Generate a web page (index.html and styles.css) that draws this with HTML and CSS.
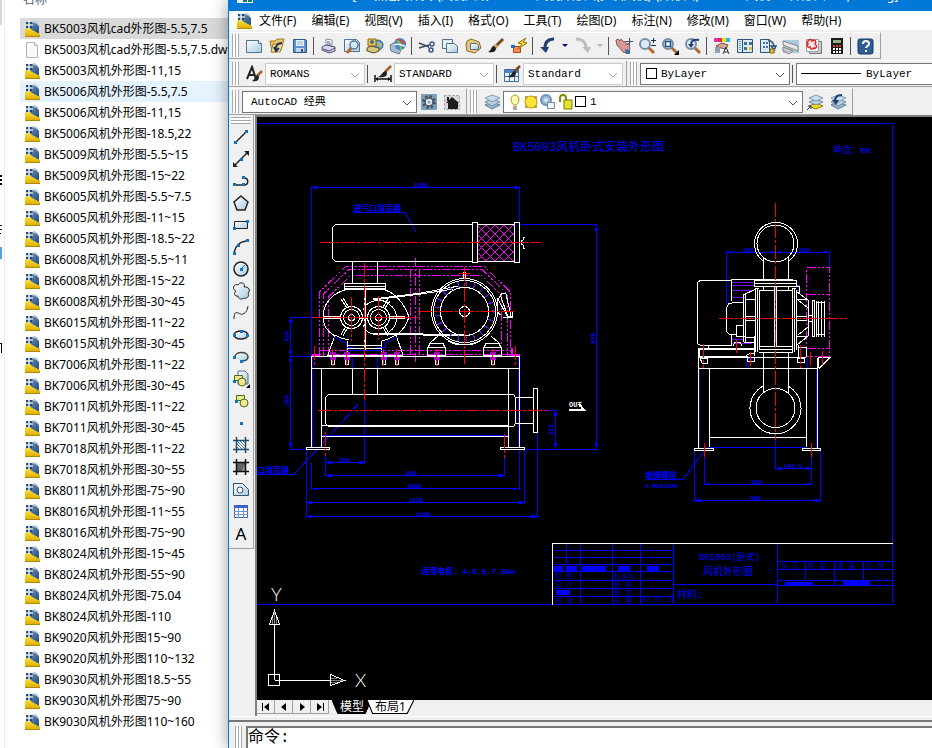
FILE: index.html
```html
<!DOCTYPE html>
<html lang="zh-CN">
<head>
    <meta charset="UTF-8">
    <meta name="viewport" content="width=device-width, initial-scale=1.0">
    <title>AutoCAD - BK5003风机cad外形图</title>
    <link rel="stylesheet" href="styles.css">
</head>
<body>
    <svg class="sprite" aria-hidden="true">
        <defs>
            <linearGradient id="gPage" x1="0" y1="0" x2="1" y2="1">
                <stop offset="0" stop-color="#7f9bb8"/><stop offset="1" stop-color="#1f4a80"/>
            </linearGradient>
            <linearGradient id="gGold" x1="0" y1="0" x2="0" y2="1">
                <stop offset="0" stop-color="#fbe23c"/><stop offset="1" stop-color="#e0b000"/>
            </linearGradient>
            <linearGradient id="gSky" x1="0" y1="0" x2="1" y2="1">
                <stop offset="0" stop-color="#ffffff"/><stop offset="1" stop-color="#a9cbe0"/>
            </linearGradient>
        </defs>
        <symbol id="dwg" viewBox="0 0 15 16">
            <path d="M3 1h7l4 4v8H1V3z" fill="url(#gPage)"/>
            <path d="M8 0c3 0 6 2 6 6v-1c-1-2-3-3-6-3z" fill="#b9c6d3"/>
            <path d="M0 8c3-2 5-1 7 1l8 4v2H0z" fill="url(#gGold)"/>
            <path d="M0 15.500h15" stroke="#b08a00"/>
            <path d="M1 1h2v2H1zM5 1h2v2H5zM1 5h2v2H1zM5 5h2v2H5z" fill="#24496f"/>
            <path d="M4 0v3M4 5v3M0 4h3M5 4h3" stroke="#fff"/>
            <circle cx="4" cy="4" r="1" fill="#fff"/>
        </symbol>
        <symbol id="blank" viewBox="0 0 15 16">
            <path d="M1.500.5h8l3 3v12h-11z" fill="#fafafa" stroke="#b5b5b5"/><path d="M9.500.5v3h3" fill="none" stroke="#b5b5b5"/>
        </symbol>
        <symbol id="lens" viewBox="0 0 18 18">
            <path d="M10 10l6 6" stroke="#b06a32" stroke-width="3"/><circle cx="7" cy="7" r="5" fill="#dcebf5" stroke="#7890a6" stroke-width="2"/>
        </symbol>
        <symbol id="brush" viewBox="0 0 18 18">
            <path d="M16 2L9 9" stroke="#7c4a20" stroke-width="3"/><path d="M10 8l-2-1-3 3 3 3 3-3z" fill="#d9a066"/><path d="M7 9c-3 0-2 4-6 6 5 1 8 0 8-4z" fill="#1c1c1c"/>
        </symbol>
        <symbol id="layers" viewBox="0 0 18 18">
            <path d="M2 12l7-3 8 3-8 4z" fill="#9db9cc" stroke="#5d7f97"/><path d="M2 9l7-3 8 3-8 4z" fill="#b9d0df" stroke="#6c8ca3"/><path d="M2 5l7-3 8 3-8 4z" fill="#c9dcea" stroke="#7f9db3"/>
        </symbol>
    </svg>

    <aside class="explorer">
        <div class="tree">
            <span class="tree-selected"></span>
            <svg width="2" height="340" viewBox="0 25 2 340"><path d="M0 175h2v2H0zM0 179h2v2H0zM0 183h2v2H0zM0 225h2v1H0zM0 229h2v1H0zM0 233h1v1H0zM0 343h2v1H0zM1 343h1v10H1z"/><path d="M0 247h2v12H0z" fill="#4ba3e3"/></svg>
        </div>
        <div class="files">
            <div class="column-head">名称</div>
            <ul class="file-list">
                <li class="selected"><svg><use href="#dwg"/></svg>BK5003风机cad外形图-5.5,7.5</li>
                <li><svg><use href="#blank"/></svg>BK5003风机cad外形图-5.5,7.5.dwl</li>
                <li><svg><use href="#dwg"/></svg>BK5003风机外形图-11,15</li>
                <li class="hovered"><svg><use href="#dwg"/></svg>BK5006风机外形图-5.5,7.5</li>
                <li><svg><use href="#dwg"/></svg>BK5006风机外形图-11,15</li>
                <li><svg><use href="#dwg"/></svg>BK5006风机外形图-18.5,22</li>
                <li><svg><use href="#dwg"/></svg>BK5009风机外形图-5.5~15</li>
                <li><svg><use href="#dwg"/></svg>BK5009风机外形图-15~22</li>
                <li><svg><use href="#dwg"/></svg>BK6005风机外形图-5.5~7.5</li>
                <li><svg><use href="#dwg"/></svg>BK6005风机外形图-11~15</li>
                <li><svg><use href="#dwg"/></svg>BK6005风机外形图-18.5~22</li>
                <li><svg><use href="#dwg"/></svg>BK6008风机外形图-5.5~11</li>
                <li><svg><use href="#dwg"/></svg>BK6008风机外形图-15~22</li>
                <li><svg><use href="#dwg"/></svg>BK6008风机外形图-30~45</li>
                <li><svg><use href="#dwg"/></svg>BK6015风机外形图-11~22</li>
                <li><svg><use href="#dwg"/></svg>BK6015风机外形图-30~45</li>
                <li><svg><use href="#dwg"/></svg>BK7006风机外形图-11~22</li>
                <li><svg><use href="#dwg"/></svg>BK7006风机外形图-30~45</li>
                <li><svg><use href="#dwg"/></svg>BK7011风机外形图-11~22</li>
                <li><svg><use href="#dwg"/></svg>BK7011风机外形图-30~45</li>
                <li><svg><use href="#dwg"/></svg>BK7018风机外形图-11~22</li>
                <li><svg><use href="#dwg"/></svg>BK7018风机外形图-30~55</li>
                <li><svg><use href="#dwg"/></svg>BK8011风机外形图-75~90</li>
                <li><svg><use href="#dwg"/></svg>BK8016风机外形图-11~55</li>
                <li><svg><use href="#dwg"/></svg>BK8016风机外形图-75~90</li>
                <li><svg><use href="#dwg"/></svg>BK8024风机外形图-15~45</li>
                <li><svg><use href="#dwg"/></svg>BK8024风机外形图-55~90</li>
                <li><svg><use href="#dwg"/></svg>BK8024风机外形图-75.04</li>
                <li><svg><use href="#dwg"/></svg>BK8024风机外形图-110</li>
                <li><svg><use href="#dwg"/></svg>BK9020风机外形图15~90</li>
                <li><svg><use href="#dwg"/></svg>BK9020风机外形图110~132</li>
                <li><svg><use href="#dwg"/></svg>BK9030风机外形图18.5~55</li>
                <li><svg><use href="#dwg"/></svg>BK9030风机外形图75~90</li>
                <li><svg><use href="#dwg"/></svg>BK9030风机外形图110~160</li>
            </ul>
        </div>
    </aside>

    <main class="cad">
        <header class="titlebar">
            <svg class="app-icon" viewBox="0 0 16 16"><path d="M0 0h16v16H0z" fill="#e8f4f2"/><path d="M1 12h3V4h3v10h2V6h3v8h3" fill="none" stroke="#0f7a70" stroke-width="2"/></svg>
            <span>AutoCAD 2007 - [D:\新建文件夹\(风机图纸\BK5003风机外形图(罗茨风机)\(外形图)\BK5003风机cad外形图-5.5,7.5.dwg]</span>
        </header>

        <nav class="menubar">
            <svg class="doc-icon"><use href="#dwg"/></svg>
            <button>文件(F)</button>
            <button>编辑(E)</button>
            <button>视图(V)</button>
            <button>插入(I)</button>
            <button>格式(O)</button>
            <button>工具(T)</button>
            <button>绘图(D)</button>
            <button>标注(N)</button>
            <button>修改(M)</button>
            <button>窗口(W)</button>
            <button>帮助(H)</button>
        </nav>

        <div class="toolbars">
            <div class="bar-row">
                <div class="toolbar">
                    <i class="grip"></i>
                    <button class="tool" title="新建"><svg viewBox="0 0 18 18"><path d="M1.500 3.500h12l3 3v9h-15z" fill="url(#gSky)" stroke="#4f7391"/><path d="M13.500 3.500v3h3" fill="#fff" stroke="#4f7391"/></svg></button>
                    <button class="tool" title="打开"><svg viewBox="0 0 18 18"><path d="M2 4h5l2-2h7l-3 11-9 2z" fill="#e9c463" stroke="#a07a1f"/><path d="M5 7h10l-3 8H3z" fill="#f7e29b" stroke="#a07a1f"/><path d="M14 6c-4 0-7 3-6 7M6 10l2 4 3-3" fill="none" stroke="#1c3557" stroke-width="2"/></svg></button>
                    <button class="tool" title="保存"><svg viewBox="0 0 18 18"><path d="M2.500 2.500h12l1 1v12h-13z" fill="#5f93cf" stroke="#31588c"/><path d="M5 3h8v6H5z" fill="#e8f1fa"/><path d="M6 5h6M6 7h6" stroke="#9ab4cf"/><path d="M5 11h8v4H5z" fill="#c8d6e3"/><path d="M10 12h2v3h-2z" fill="#31588c"/></svg></button>
                    <i class="sep"></i>
                    <button class="tool" title="打印"><svg viewBox="0 0 18 18"><path d="M6 9V2l6 1v6z" fill="#fff" stroke="#8a8aa8"/><path d="M2 10l4-2 9 2v4l-6 2-7-3z" fill="#d7d7e6" stroke="#4d4d78"/><path d="M3 12l6 2 6-3M7 5h3M7 7h4" fill="none" stroke="#4d4d78"/></svg></button>
                    <button class="tool" title="打印预览"><svg viewBox="0 0 18 18"><path d="M1.500 2.500h12l3 3v9h-15z" fill="url(#gSky)" stroke="#4f7391"/><path d="M9 10l-5 6" stroke="#b06a32" stroke-width="3"/><circle cx="11" cy="8" r="4" fill="#d5e8f5" stroke="#5a7895" stroke-width="1.500"/></svg></button>
                    <button class="tool" title="发布"><svg viewBox="0 0 18 18"><circle cx="12" cy="8" r="5" fill="#6f9fd0" stroke="#35597f"/><path d="M11 5l5 2-2 4z" fill="#a5c56d"/><path d="M2 2h8v7H2z" fill="#f0c84a" stroke="#8a6a10"/><circle cx="6" cy="5" r="2" fill="#3a6ea5"/><path d="M1 11l4-2 8 2v3l-5 2-7-2z" fill="#d7c87c" stroke="#4d4d28"/></svg></button>
                    <button class="tool" title="三维 DWF"><svg viewBox="0 0 18 18"><path d="M1 8l7-4 6 5-4 8-8-3z" fill="#a8bccd" stroke="#657e95"/><circle cx="11" cy="7" r="6" fill="#4b86c4"/><path d="M7 3c5-2 5 4 10 3" stroke="#d24b3e" stroke-width="2" fill="none"/><path d="M8 4c4 1 4 8 4 9" stroke="#6fc25f" stroke-width="2" fill="none"/><path d="M5 8c4-2 7 0 11 1" stroke="#eef4fa" stroke-width="1.500" fill="none"/></svg></button>
                    <i class="sep"></i>
                    <button class="tool" title="剪切"><svg viewBox="0 0 18 18"><path d="M1 6l10 4M1 11l10-3" stroke="#3b4a5e" stroke-width="1.500"/><circle cx="14" cy="7" r="2" fill="none" stroke="#3c5488" stroke-width="1.500"/><circle cx="13" cy="13" r="2" fill="none" stroke="#3c5488" stroke-width="1.500"/><path d="M10 9l2-1M9 9l3 3" stroke="#3c5488"/></svg></button>
                    <button class="tool" title="复制"><svg viewBox="0 0 18 18"><path d="M1.500 2.500h10v9h-10z" fill="#e6f0f7" stroke="#4f7391"/><path d="M5.500 6.500h8l3 3v6h-11z" fill="url(#gSky)" stroke="#4f7391"/></svg></button>
                    <button class="tool" title="粘贴"><svg viewBox="0 0 18 18"><path d="M3 4l4-2 8 3 2 6-6 5-8-2-1-6z" fill="#e5c879" stroke="#8f6d22"/><path d="M6.500 6.500h6l2 2v4h-8z" fill="url(#gSky)" stroke="#4f7391"/></svg></button>
                    <button class="tool" title="特性匹配"><svg><use href="#brush"/></svg></button>
                    <button class="tool" title="块编辑器"><svg viewBox="0 0 18 18"><path d="M3.500 9.500h7v6h-7z" fill="#f58b53" stroke="#b3471a"/><path d="M1 8h4v3H1z" fill="#1f6fc4"/><path d="M16 1L8 6l4 1-4 5 9-6-4-1z" fill="#ffd92e" stroke="#9a7300"/></svg></button>
                    <i class="sep"></i>
                    <button class="tool" title="放弃"><svg viewBox="0 0 18 18"><path d="M15 2C8 2 6 6 6 11" fill="none" stroke="#1d3f73" stroke-width="3"/><path d="M1 10h9l-3 6z" fill="#1d3f73"/></svg></button>
                    <button class="drop" title="放弃列表"></button>
                    <button class="tool" title="重做"><svg viewBox="0 0 18 18"><path d="M2 2c7 0 10 4 10 9" fill="none" stroke="#b9bdc2" stroke-width="3"/><path d="M8 10h9l-3 6z" fill="#b9bdc2"/></svg></button>
                    <button class="drop off" title="重做列表"></button>
                    <i class="sep"></i>
                    <button class="tool" title="实时平移"><svg viewBox="0 0 18 18"><path d="M1 3l2-1 2 2 1-2 3 3 1-1 2 4 1-2 1 1 1 5-3 4-4-1-6-7z" fill="#d69a94" stroke="#8e5651"/><path d="M10 12l5 1v4h-4z" fill="#3a6ea5"/><path d="M14.500 1v7M11 4.500h7" stroke="#2b4f7d"/></svg></button>
                    <button class="tool" title="实时缩放"><svg viewBox="0 0 18 18"><use href="#lens"/><path d="M13 3.500h5M15.500 1v5M13 8.500h5" stroke="#1c3557"/></svg></button>
                    <button class="tool" title="窗口缩放"><svg viewBox="0 0 18 18"><use href="#lens"/><path d="M4.500 4.500h5v5h-5z" fill="#fff" stroke="#1d4f8c" stroke-width="1.500"/><path d="M18 13v5h-5z" fill="#000"/></svg></button>
                    <button class="tool" title="缩放上一个"><svg viewBox="0 0 18 18"><use href="#lens"/><path d="M15 3C8 2 7 5 7 8" stroke="#1d3f73" stroke-width="2" fill="none"/><path d="M4 7h6l-3 4z" fill="#1d3f73"/></svg></button>
                    <i class="sep"></i>
                    <button class="tool" title="特性"><svg viewBox="0 0 18 18"><path d="M1 1h4v4H1z" fill="#e02fc0"/><path d="M5 1h4v4H5z" fill="#e03030"/><path d="M9 1h4v4H9z" fill="#f0e020"/><path d="M13 1h4v4h-4z" fill="#28b8e0"/><path d="M3 9l6-3 6 2-2 4-5-1z" fill="#dba596" stroke="#7d4f45"/><path d="M2 10h5v6H2z" fill="#8fa0b0"/><path d="M10 17l3-7 3 7M11 15h4" fill="none" stroke="#333"/></svg></button>
                    <button class="tool" title="设计中心"><svg viewBox="0 0 18 18"><path d="M1.500 2.500h15v13h-15z" fill="#dbe9f3" stroke="#2d537c"/><path d="M6.500 3v12" stroke="#2d537c"/><path d="M4 4v10" stroke="#2d537c" stroke-dasharray="1 1"/><path d="M8 5h3v3H8zM13 5h3v3h-3zM8 10h3v3H8z" fill="#44709b"/><path d="M13 10h3v3h-3z" fill="#e4c42f"/></svg></button>
                    <button class="tool" title="工具选项板"><svg viewBox="0 0 18 18"><path d="M1.500 2.500h9v13h-9z" fill="#dbe9f3" stroke="#2d537c"/><path d="M4 5h2v2H4zM7 5h2v2H7zM4 9h2v2H4zM7 9h2v2H7z" fill="#44709b"/><path d="M9 4c4-1 6 3 6 6M12 9h5l-2 4z" fill="none" stroke="#2d537c" stroke-width="1.500"/><path d="M11 12h4v4h-4z" fill="#e4c42f" stroke="#7d6b10"/></svg></button>
                    <button class="tool" title="图纸集管理器"><svg viewBox="0 0 18 18"><path d="M1 3h16v13H1z" fill="#a9c9dc"/><path d="M1 4l15 5v5L1 8z" fill="#e6e6e6" stroke="#888"/><path d="M1 10l10 4-4 3-6-3z" fill="#c4c8cc" stroke="#888"/></svg></button>
                    <button class="tool" title="标记集管理器"><svg viewBox="0 0 18 18"><path d="M4.500 4.500h12v12h-12z" fill="#ccc" stroke="#777"/><path d="M1.500 2.500h12v12h-12z" fill="#fff" stroke="#8fa0b0"/><path d="M3 4c2-3 4-1 4 0 3-2 5 1 3 3 3 2 1 5-1 4-2 2-4 1-4-1-3 1-4-2-2-3-1-1-1-2 0-3z" fill="#ffe3e3" stroke="#e12222" stroke-width="1.500"/></svg></button>
                    <button class="tool" title="快速计算器"><svg viewBox="0 0 18 18"><path d="M3 1h12v16H3z" fill="#1c1c1c"/><path d="M5 3h8v3H5z" fill="#8fb07f"/><path d="M5 9h8" stroke="#e03030" stroke-width="2" stroke-dasharray="2 1"/><path d="M5 12h8M5 15h8" stroke="#fff" stroke-width="2" stroke-dasharray="2 1"/></svg></button>
                    <i class="sep"></i>
                    <button class="tool" title="帮助"><svg viewBox="0 0 18 18"><rect x="1" y="2" width="15" height="15" rx="2" fill="#2d5d92" stroke="#173c66"/><path d="M6 7c0-4 6-4 6 0 0 2-3 2-3 4M9 13v2" fill="none" stroke="#fff" stroke-width="2"/></svg></button>
                </div>
            </div>

            <div class="bar-row">
                <div class="toolbar">
                    <i class="grip"></i>
                    <button class="tool" title="文字样式"><svg viewBox="0 0 18 18"><path d="M2 14L7 2l4 12M4 10h6" fill="none" stroke="#222" stroke-width="2"/><path d="M17 6l-5 5" stroke="#a3622f" stroke-width="2.500"/><path d="M13 10c-3 0-2 4-6 6 4 1 7 0 7-4z" fill="#222"/></svg></button>
                    <label class="combo soft style"><select aria-label="文字样式"><option>ROMANS</option></select></label>
                    <i class="sep"></i>
                    <button class="tool" title="标注样式"><svg viewBox="0 0 18 18"><path d="M1 10v7M17 10v7M2 14h14" stroke="#111" stroke-width="1.500"/><path d="M4 12v4l-3-2zM14 12v4l3-2z" fill="#111"/><path d="M17 1l-6 6" stroke="#a3622f" stroke-width="2.500"/><path d="M12 6c-3 0-4 4-8 6 5 1 9 0 9-4z" fill="#222"/></svg></button>
                    <label class="combo soft style"><select aria-label="标注样式"><option>STANDARD</option></select></label>
                    <i class="sep"></i>
                    <button class="tool" title="表格样式"><svg viewBox="0 0 18 18"><path d="M1.500 4.500h14v12h-14z" fill="#eaf2fa" stroke="#3d6ea8"/><path d="M2 5h13v3H2z" fill="#4f83c4"/><path d="M2 11.500h13M6.500 8v8M11.500 8v8" stroke="#3d6ea8"/><path d="M17 1l-6 6" stroke="#7c4a20" stroke-width="2.500"/><path d="M12 6c-3 0-3 4-7 6 5 1 8 0 8-4z" fill="#222"/></svg></button>
                    <label class="combo soft style"><select aria-label="表格样式"><option>Standard</option></select></label>
                </div>
                <div class="toolbar">
                    <i class="grip"></i>
                    <label class="combo property"><i class="swatch"></i><select aria-label="颜色"><option>ByLayer</option></select></label>
                    <i class="sep"></i>
                    <label class="combo property"><i class="linetype"></i><select aria-label="线型"><option>ByLayer</option></select></label>
                </div>
            </div>

            <div class="bar-row">
                <div class="toolbar">
                    <i class="grip"></i>
                    <label class="combo workspace-name"><select aria-label="工作空间"><option>AutoCAD 经典</option></select></label>
                    <button class="tool" title="工作空间设置"><svg viewBox="0 0 18 18"><path d="M1 1h16v16H1z" fill="#7f9fba"/><circle cx="9" cy="9" r="5.500" fill="none" stroke="#48535e" stroke-width="3" stroke-dasharray="2.300 2"/><circle cx="9" cy="9" r="4" fill="#e6ebef" stroke="#48535e" stroke-width="1.500"/><circle cx="9" cy="9" r="1.500" fill="#7f9fba"/></svg></button>
                    <button class="tool" title="我的工作空间"><svg viewBox="0 0 18 18"><path d="M1.500 2.500h15v14h-15z" fill="#d8d8d8" stroke="#8a98a5" stroke-dasharray="2 2"/><path d="M3 10l6-6 7 6h-1v6H5v-6z" fill="#1d1d1d"/><path d="M4 4h2v4H4z" fill="#1d1d1d"/></svg></button>
                </div>
                <div class="toolbar">
                    <i class="grip"></i>
                    <button class="tool" title="图层特性管理器"><svg><use href="#layers"/></svg></button>
                    <label class="combo layer">
                        <svg class="layer-state" viewBox="0 0 66 18"><path d="M6 12c-5-4-3-10 1-10s6 6 1 10z" fill="#fffbb0" stroke="#b39a00"/><path d="M5 14h4M5 16h4" stroke="#555"/><path d="M17 3h3v3h-3zM26 3h3v3h-3zM17 12h3v3h-3zM26 12h3v3h-3z" fill="#a5a86a"/><circle cx="23" cy="9" r="6" fill="#ffe438" stroke="#b89500"/><circle cx="38" cy="7" r="5" fill="#9fbcd4" stroke="#6c93b5" stroke-width="2"/><circle cx="38" cy="7" r="2" fill="#d7e4ee"/><path d="M39.500 9.500h7v6h-7z" fill="#eef4f8" stroke="#6c8ca3"/><path d="M52 9V5c0-4 6-4 6 0v3" fill="none" stroke="#8a8a00" stroke-width="2"/><path d="M56 7h8v9h-8z" fill="#e6e02e" stroke="#7c7a00"/></svg>
                        <i class="swatch"></i><select aria-label="图层"><option>1</option></select>
                    </label>
                    <button class="tool" title="置为当前图层"><svg viewBox="0 0 18 18"><path d="M3 13l7-3 7 3-7 3z" fill="#f2dc1c" stroke="#8f7e00"/><path d="M3 9l7-3 7 3-7 3z" fill="#b9d0df" stroke="#6c8ca3"/><path d="M3 5l7-3 7 3-7 3z" fill="#c9dcea" stroke="#7f9db3"/><path d="M1 17l4-4M2 13h3v3" fill="none" stroke="#1d3f73"/></svg></button>
                    <button class="tool" title="上一个图层"><svg viewBox="0 0 18 18"><use href="#layers"/><path d="M13 2C7 2 6 5 6 8" fill="none" stroke="#1d3f73" stroke-width="2"/><path d="M3 7h7l-3 5z" fill="#1d3f73"/></svg></button>
                </div>
            </div>
        </div>

        <div class="workspace">
            <div class="draw-tools">
                <i class="grip flat"></i>
                <button class="tool" title="直线"><svg viewBox="0 0 18 18"><path d="M3 15L15 3" stroke="#222" stroke-width="1.500"/><path class="node" d="M2 13h3v3H2zM13 2h3v3h-3z"/></svg></button>
                <button class="tool" title="构造线"><svg viewBox="0 0 18 18"><path d="M2 16L16 2" stroke="#222" stroke-width="1.500"/><path d="M1 17v-5l5 5zM17 1v5l-5-5z" fill="#222"/><path class="node" d="M8 8h3v3H8z"/></svg></button>
                <button class="tool" title="多段线"><svg viewBox="0 0 18 18"><path d="M2 13h10c5 0 5-7 0-7" fill="none" stroke="#222" stroke-width="1.500"/><path class="node" d="M1 11h3v3H1zM10 11h3v3h-3zM10 4h3v3h-3z"/></svg></button>
                <button class="tool" title="正多边形"><svg viewBox="0 0 18 18"><path d="M9 2l7 6-3 8H5L2 8z" fill="url(#gSky)" stroke="#222" stroke-width="1.500"/></svg></button>
                <button class="tool" title="矩形"><svg viewBox="0 0 18 18"><path d="M2.500 5.500h13v7h-13z" fill="url(#gSky)" stroke="#222"/><path class="node" d="M1 11h3v3H1zM14 4h3v3h-3z"/></svg></button>
                <button class="tool" title="圆弧"><svg viewBox="0 0 18 18"><path d="M2 16C3 8 8 3 16 3" fill="none" stroke="#222" stroke-width="1.500"/><path class="node" d="M1 14h3v3H1zM14 1h3v3h-3zM5 6h3v3H5z"/></svg></button>
                <button class="tool" title="圆"><svg viewBox="0 0 18 18"><circle cx="9" cy="9" r="7" fill="url(#gSky)" stroke="#222" stroke-width="1.500"/><path d="M9 9l4-4" stroke="#1f6fc4"/><path class="node" d="M8 8h3v3H8z"/></svg></button>
                <button class="tool" title="修订云线"><svg viewBox="0 0 18 18"><path d="M4 9C0 8 1 1 6 3c2-4 8-2 6 2 5-1 7 4 4 6 2 4-2 6-4 5-2 2-6 1-6-2-3 1-5-3-2-5z" fill="url(#gSky)" stroke="#222"/></svg></button>
                <button class="tool" title="样条曲线"><svg viewBox="0 0 18 18"><path d="M2 15c0-12 6-3 9-5s4-2 5-8" fill="none" stroke="#222"/></svg></button>
                <button class="tool" title="椭圆"><svg viewBox="0 0 18 18"><ellipse cx="9" cy="9" rx="7" ry="4" fill="url(#gSky)" stroke="#222" stroke-width="1.500"/><path class="node" d="M1 8h3v3H1zM14 8h3v3h-3zM8 4h3v3H8z"/></svg></button>
                <button class="tool" title="椭圆弧"><svg viewBox="0 0 18 18"><path d="M3 9c0-6 13-6 13 0 0 3-4 4-7 4" fill="url(#gSky)" stroke="#444" stroke-width="1.500"/><path class="node" d="M1 8h3v3H1zM8 12h3v3H8z"/></svg></button>
                <button class="tool" title="插入块"><svg viewBox="0 0 18 18"><path d="M6 1h7l3 3v10H6z" fill="url(#gSky)" stroke="#4f7391"/><path d="M2.500 5.500h8v5h-8z" fill="#f3e58a" stroke="#4a6a2a"/><circle cx="10" cy="12" r="4" fill="#f3e58a" stroke="#4a6a2a"/><path class="node" d="M1 10h3v3H1z"/><path d="M18 14v4h-4z" fill="#000"/></svg></button>
                <button class="tool" title="创建块"><svg viewBox="0 0 18 18"><path d="M4.500 3.500h8v5h-8z" fill="#f3e58a" stroke="#4a6a2a"/><circle cx="12" cy="11" r="4" fill="#f3e58a" stroke="#4a6a2a"/><path class="node" d="M3 8h3v3H3z"/></svg></button>
                <button class="tool" title="点"><svg viewBox="0 0 18 18"><path class="node" d="M8 8h3v3H8z"/></svg></button>
                <button class="tool" title="图案填充"><svg viewBox="0 0 18 18"><path d="M5 5h9v9H5z" fill="#fff"/><path d="M5 8l6 6M5 5l9 9M8 5l6 6M5 11l3 3M11 5l3 3" stroke="#3c7ba0"/><path d="M4.500 1v16M13.500 1v16M1 4.500h16M1 13.500h16" stroke="#1d4d6d" stroke-width="1.500"/></svg></button>
                <button class="tool" title="渐变色"><svg viewBox="0 0 18 18"><path d="M5 5h9v9H5z" fill="#5f6370"/><path d="M9 14l5-9v9z" fill="#a39c63"/><path d="M4.500 1v16M13.500 1v16M1 4.500h16M1 13.500h16" stroke="#111" stroke-width="1.500"/></svg></button>
                <button class="tool" title="面域"><svg viewBox="0 0 18 18"><path d="M1.500 3.500h9l6 6v6h-15z" fill="url(#gSky)" stroke="#33536f"/><circle cx="8" cy="10" r="3" fill="#fff" stroke="#33536f"/></svg></button>
                <button class="tool" title="表格"><svg viewBox="0 0 18 18"><path d="M2.500 3.500h13v12h-13z" fill="#fff" stroke="#3b62b0"/><path d="M2 3h14v3H2z" fill="#3b62c4"/><path d="M2 9.500h14M2 12.500h14M6.500 6v10M11.500 6v10" stroke="#6f93d6"/></svg></button>
                <button class="tool letter" title="多行文字">A</button>
            </div>

            <div class="model">
                <div class="canvas">
                    <!-- BK5003 outline drawing: front view, side view, title block, UCS icon -->
                    <svg class="drawing" width="675" height="582" viewBox="257 117 675 582">
                        <defs>
                            <pattern id="mesh" width="9" height="9" patternUnits="userSpaceOnUse">
                                <path d="M0 0l9 9M9 0L0 9" class="m"/>
                            </pattern>
                            <g id="bolt">
                                <path d="M-3 1h6v3h-6zM-3 6h6v3h-6z" class="bolt-head"/>
                                <path d="M-1.500 9v4h3v-4" class="w"/>
                                <path d="M0-2v17" class="r"/>
                            </g>
                        </defs>

                        <!-- sheet frame -->
                        <path class="b" d="M257 123.500h635.500v481H257"/>
                        <text class="title" x="513" y="151">BK5003风机卧式安装外形图</text>
                        <text class="t9" x="833" y="153">单位：mm</text>

                        <!-- dimensions, front view -->
                        <g class="b">
                            <path d="M311.500 186v170M519.500 186v38M311.500 187.500h208M520 224.500h77M596.500 224v225M524 449.500h74"/>
                            <path d="M353 212.500h52l11 19M413 226l2 4"/>
                            <path d="M290.500 317v132M290 317.500h21M290 356.500h21M290 449.500h16"/>
                            <path d="M325.500 456v21M364.500 400v64M325 462.500h39M504.500 458v19M325 475.500h179"/>
                            <path d="M311.500 463v27M519.500 449v41M311 488.500h208M306.500 450v68M524.500 450v54M306 502.500h218M537.500 433v85M306 516.500h231"/>
                            <path d="M555.500 410v39M537 410.500h20M257 474.500h37l64-70M352 411l5-6"/>
                            <path d="M312.500 357v90M518.500 357v90M321 435.500h187"/>
                            <path d="M352.500 358v10M377.500 358v10"/>
                        </g>
                        <path class="fill-b" d="M314 186h3v3h-3zM514 186h3v3h-3zM328 461h4v3h-4zM359 461h4v3h-4zM328 474h4v3h-4zM498 474h4v3h-4zM314 488h3v2h-3zM513 488h3v2h-3zM309 501h3v3h-3zM518 501h4v3h-4zM309 515h3v3h-3zM531 515h4v3h-4zM554 413h3v3h-3zM554 443h3v3h-3zM289 351h3v2h-3zM289 359h3v2h-3zM289 443h3v3h-3zM595 443h3v3h-3zM595 228h3v3h-3zM289 320h3v3h-3z"/>
                        <g class="dim">
                            <text x="414" y="187">1080</text><text x="339" y="462">200</text><text x="406" y="475">940</text>
                            <text x="407" y="488">1080</text><text x="409" y="502">1120</text><text x="416" y="516">1190</text>
                            <text transform="translate(553 435) rotate(-90)">153</text>
                            <text transform="translate(289 342) rotate(-90)">330</text>
                            <text transform="translate(289 406) rotate(-90)">280</text>
                            <text transform="translate(595 344) rotate(-90)">898</text>
                        </g>
                        <text class="t8" x="353" y="211">进气口消音器</text>
                        <text class="t8" x="257" y="473">口消音器</text>

                        <!-- belt guard -->
                        <g class="m dashdot">
                            <path d="M319.500 356v-64l26-25.500h139l26 25.500v64M323.500 356v-62l25.500-24.500h133l25 24.500v62M328.500 356v-59l22-21.500h131l20 20v60"/>
                            <path d="M410.500 269v87M415.500 258v106M419.500 269v87M320 350.500h190M312 354.500h206"/>
                        </g>
                        <path class="fill-m" d="M312 354h8v3h-8zM511 348h2v9h-2zM513 354h7v3h-7z"/>

                        <!-- inlet silencer -->
                        <g class="w">
                            <path d="M472 224.500H335.500l-3 3v31l3 3H472M472.500 222.500h5v40h-5zM514.500 222.500h5v40h-5zM478 224.500h36M478 261.500h36"/>
                            <path d="M520 242.500h4M525 237h-2v3l-2 1v3l2 1v3h2"/>
                            <path d="M352.500 262v21M377.500 262v21M344.500 283.500h41v6h-41zM344 286.500h41M344 288.500h41"/>
                        </g>
                        <path d="M478 225h36v36h-36z" fill="url(#mesh)"/>

                        <!-- blower -->
                        <g class="w">
                            <path d="M345 290c-12 3-22 13-22 27 0 9 5 15 12 19M385 290c10 3 19 13 24 27-3 10-8 15-13 19M335 335l-7 20M396 335l7 20M335 335l6 3 8 2M396 335l-8 4-6 2M347.500 341v15M381.500 341v15M348 345.500h34M348 348.500h34M327 355h76"/>
                            <circle cx="351.500" cy="317.500" r="11"/><circle cx="351.500" cy="317.500" r="8"/><circle cx="351.500" cy="317.500" r="3"/>
                            <circle cx="378.500" cy="317.500" r="11"/><circle cx="378.500" cy="317.500" r="8"/><circle cx="378.500" cy="317.500" r="3"/>
                            <path d="M363 310c3-9 18-13 26-6 10 7 10 21 0 28M363 325c2 6 7 9 12 9"/>
                            <path d="M341 299l6 9M343 298l5 8M341 335l5-9M343 336l5-9M388 299l-5 8M390 301l-5 7M388 336l-5-9M390 335l-5-8"/>
                            <path d="M324 316.500h17M324 318.500h17M389 316.500h16M389 318.500h16"/>
                            <path d="M373 299l48-6 38-7M373 300l48-6 32-5M373 333.500h50M373 334.500h92M423 335.500h42"/>
                        </g>
                        <path class="heavy" d="M365 290v60M359 317.500h8"/>
                        <path class="b" d="M334 337l12 6v4h8M397 337l-12 6v4h-8M345 350.500h40"/>

                        <!-- motor -->
                        <circle class="ticks" cx="464.500" cy="311.500" r="27"/>
                        <g class="w">
                            <circle cx="464.500" cy="311.500" r="33"/><circle cx="464.500" cy="311.500" r="31"/><circle cx="464.500" cy="311.500" r="24"/><circle cx="464.500" cy="311.500" r="5"/>
                            <path d="M463.500 278v-6h2v6"/>
                            <path d="M498 300l4-7 4 1 5 22h-4l-9-17zM500 294l8 23M501 315l-4-3v-14M503 317h9v-5"/>
                            <path d="M438 336l-8 7M491 336l8 7M448 341c6 5 26 5 32 0"/>
                            <path d="M429.500 343.500h14l1 4h-16zM427.500 347.500h18v8h-18zM485.500 343.500h14l1 4h-16zM483.500 347.500h18v8h-18z"/>
                        </g>

                        <!-- base with outlet silencer -->
                        <g class="w">
                            <path d="M311 356.500h208.500M311.500 356v91M519.500 356v91M311 368.500h208M321.500 368v79M508.500 368v79"/>
                            <path d="M352.500 368v26M377.500 368v26M328.500 394.500h185l2 3v26l-2 3h-185l-3-3v-26zM321 425.500h187M321 436.500h187"/>
                            <path d="M516 397.500h17M516 423.500h17M533.500 388.500h4v44h-4zM306.500 447.500h23v2h-23zM500.500 447.500h24v2h-24z"/>
                        </g>
                        <use href="#bolt" x="332.500" y="351"/><use href="#bolt" x="346.500" y="351"/><use href="#bolt" x="383.500" y="351"/><use href="#bolt" x="396.500" y="351"/>
                        <use href="#bolt" x="436.500" y="351"/><use href="#bolt" x="492.500" y="351"/>

                        <!-- centre lines -->
                        <g class="r dash">
                            <path d="M320 242.500h221M364.500 263v137M351.500 297v44M378.500 296v44M312 317.500h108M464.500 267v97M418 311.500h96M318 410.500h232"/>
                            <path d="M325.500 432v24M504.500 434v24M314.500 346v20M515.500 346v20M459 273.500h11"/>
                        </g>

                        <!-- flow direction -->
                        <text class="out" x="569" y="407">OUT</text>
                        <path class="heavy" d="M569 410h15l-5-6"/>

                        <!-- side view dimensions -->
                        <g class="b">
                            <path d="M726.500 251v54M829.500 251v16M726 252.500h103M775.500 440v30M775 468.500h36M704.500 457v28M811.500 457v28M704 484.500h107M694.500 451v51M820.500 451v51M694 500.500h126"/>
                            <path d="M646 479.500h37l21-28M699.500 369v79M816.500 369v79M709 447.500h97"/>
                            <path d="M746 358v10M763.500 358v10M788.500 358v10M807 358v10M746 358.500h9"/>
                        </g>
                        <path class="fill-b" d="M729 251h3v2h-3zM770 251h3v2h-3zM778 251h3v2h-3zM824 251h3v2h-3zM778 467h3v3h-3zM806 467h3v3h-3zM707 483h3v2h-3zM806 483h3v2h-3zM697 499h4v3h-4zM815 499h3v3h-3z"/>
                        <g class="dim">
                            <text x="743" y="252">188</text><text x="799" y="252">200</text><text x="784" y="468">144.5</text>
                            <text x="751" y="484">398</text><text x="750" y="500">460</text><text x="645" y="488">4-M16x300</text>
                        </g>
                        <text class="t8" x="645" y="478">地脚螺栓</text>

                        <!-- side view -->
                        <path class="m dashdot" d="M806.500 267.500h23v89h-23zM807 294.500h23M807 348.500h23"/>
                        <path class="p" d="M732 282.500h22M732 285.500h22M732 290.500h22M732 297.500h13M732 339.500h12M732 343.500h20M797 285.500h3M797 290.500h3"/>
                        <g class="w">
                            <circle cx="775.500" cy="243.500" r="18.500"/>
                            <path d="M763 261a21.500 21.500 0 1 1 26 0M763.500 257v23M788.500 257v23M754.500 280.500h42v6h-42zM754 283.500h42M731 279.500h62M731.500 279v22"/>
                            <path d="M731 280.500h-31l-2.500 2v61l3 2h31M731.500 334v12M744 302.500h-8l-7 1-2.500 4v24l3 3h7M744 325.500h-8v11l20 1M743.500 294v48M745.500 294v48M744 294.500l11-5M745 299.500h10M745 316.500h10M745 320.500h10M744 342.500h11"/>
                            <path d="M755.500 288v64M757.500 288v64M759.500 290v60M792.500 288v64M794.500 288v64M796.500 290v60M755 288.500h4M792 288.500h4M760 290.500h32M763.500 287v3M788.500 287v3M760 346.500h32M760 349.500h32M759 352.500h34"/>
                            <path d="M774.500 287v60M776.500 287v60M797 292l11 8v36l-11 9M797 299.500h11M797 336.500h11M798 300l10 8M798 335l10-8M797 316.500h10M797 320.500h10M797 286h2v8"/>
                            <path d="M812.500 300.500h2v36h-2zM816.500 300.500v36M818.500 300.500v36M821.500 300.500v36M824.500 300.500v36M812 300.500h3M817 302.500h8M817 334.500h8M808 315.500h5M808 321.500h5"/>
                            <path d="M698.500 358v90M817.500 358v90M698 368.500h120M709.500 368v79M806.500 368v79M709 437.500h97M745 357.500h61M818 357.500h12l-11 11M818.500 358v10M694.500 448.500h19v2h-19zM802.500 448.500h18v2h-18z"/>
                            <circle cx="775.500" cy="408" r="19.500"/>
                            <path d="M763.500 353v40M788.500 353v40M763 386a25.500 25.500 0 1 0 25 0M700 345.500h8v3M733 345.500l2-3h5l2 3M746 355.500l4-2h5M754.500 336v20M798 345v12M806 347v10M799 347.500h8"/>
                            <path d="M700 358h7v5h-5zM747 357h7v4h-7zM797 358h7v4h-7z"/>
                        </g>
                        <path class="heavy" d="M698 349h57M698 357h50M699 348v10"/>
                        <g class="r dash">
                            <path d="M775.500 203v237M719 318.500h128M704.500 443v14M811.500 443v14M703.500 344v24M736.500 340v13M750.500 352v14M800.500 345v23M810.500 352v13M822.500 351v14"/>
                        </g>

                        <!-- title block -->
                        <g class="b">
                            <path d="M566.500 543v22M580.500 543v61M612.500 543v61M640.500 543v61M673.500 543v61M777.500 543v61M805.500 562v18M834.500 562v23M863.500 562v18"/>
                            <path d="M552 550.500h121M552 557.500h121M552 564.500h121M552 571.500h121M552 580.500h121M552 588.500h121M552 596.500h121M673 584.500h104M777 561.500h115M777 569.500h115M777 580.500h115M777 585.500h115"/>
                        </g>
                        <path class="w" d="M552.500 605v-61.500h340.500"/>
                        <path class="fill-b" d="M553 566h10v5h-10zM566 566h11v5h-11zM582 566h24v5h-24zM618 566h12v5h-12zM647 566h12v5h-12zM556 590h14v5h-14zM785 582h28v3h-28zM843 581h27v4h-27z"/>
                        <g class="faint">
                            <text x="555" y="578">制 图</text><text x="555" y="587">设 计</text><text x="555" y="603">校 对</text>
                            <text x="614" y="579">标准化</text><text x="614" y="587">审 核</text><text x="614" y="595">审 定</text><text x="614" y="603">日 期</text>
                            <text x="642" y="602">02.07.16</text>
                            <text x="781" y="568">标 记</text><text x="808" y="568">数 量</text><text x="837" y="568">重 量</text><text x="866" y="568">比 例</text>
                        </g>
                        <text class="t9" x="699" y="560">BK5003(卧式)</text>
                        <text class="t10" x="703" y="575">风机外形图</text>
                        <text class="t10" x="677" y="598">材料：</text>
                        <text class="t8" x="421" y="574">适用电机: 4,5.5,7.5kw</text>

                        <!-- UCS icon -->
                        <g class="ucs">
                            <path d="M268.500 674.500h11v11h-11zM279 680.500h51M274.500 680v-55M269.500 624.500l5-14 5 14zM330.500 674.500l14 6-14 5z"/>
                            <path d="M274.500 612v12M272.500 618v6M276.500 618v6M331 680.500h12M331 678.500h6M331 682.500h6" stroke-opacity=".5"/>
                            <path d="M274.500 680.500h5"/>
                            <text x="271" y="601">Y</text><text x="355" y="687">X</text>
                        </g>
                    </svg>
                </div>
                <div class="tabs">
                    <button class="step" title="第一个"><svg viewBox="0 0 12 10"><path d="M2 1h1v8H2zM9 1v8L4 5z"/></svg></button>
                    <button class="step" title="上一个"><svg viewBox="0 0 12 10"><path d="M8 1v8L3 5z"/></svg></button>
                    <button class="step" title="下一个"><svg viewBox="0 0 12 10"><path d="M4 1v8l5-4z"/></svg></button>
                    <button class="step" title="最后一个"><svg viewBox="0 0 12 10"><path d="M3 1v8l5-4zM9 1h1v8H9z"/></svg></button>
                    <button class="tab current"><svg viewBox="0 0 42 14" preserveAspectRatio="none"><path d="M0 0l6 13.500h29L41 0"/></svg><span>模型</span></button>
                    <button class="tab"><svg viewBox="0 0 42 14" preserveAspectRatio="none"><path d="M0 0l5 13.500h31L42 0"/></svg><span>布局1</span></button>
                </div>
            </div>
        </div>

        <div class="command">
            <i class="grip"></i>
            <div class="prompt"><label for="cmd">命令:</label><input id="cmd" type="text"></div>
        </div>
    </main>
</body>
</html>
```
FILE: styles.css
```css
* {
    box-sizing: border-box;
}

body {
    margin: 0;
    display: flex;
    height: 100vh;
    overflow: hidden;
    background: #fff;
    font-family: "Noto Sans", "Noto Sans CJK SC", sans-serif;
    font-size: 12px;
    color: #000;
}

button {
    border: 0;
    padding: 0;
    background: none;
    font: inherit;
    color: inherit;
}

.sprite {
    position: absolute;
    width: 0;
    height: 0;
}

/* file explorer */
.explorer {
    display: flex;
    flex: 0 0 228px;
    overflow: hidden;
}

.tree {
    display: flex;
    flex-direction: column;
    width: 5px;
    border-right: 1px solid #ececec;
}

.tree-selected {
    width: 2px;
    height: 25px;
    background: #d9d9d9;
}

.files {
    flex: 1;
    min-width: 0;
    padding-left: 15px;
}

.column-head {
    height: 18px;
    padding-left: 3px;
    line-height: 0;
    color: #4c607a;
}

.file-list {
    margin: 0;
    padding: 0;
    list-style: none;
}

.file-list li {
    display: flex;
    align-items: center;
    gap: 4px;
    height: 21px;
    padding-left: 5px;
    line-height: 21px;
    white-space: nowrap;
}

.file-list svg {
    flex: none;
    width: 15px;
    height: 16px;
}

.file-list .selected {
    background: #d9d9d9;
}

.file-list .hovered {
    background: #e5f3ff;
}

/* application window */
.cad {
    position: relative;
    display: flex;
    flex: 1;
    flex-direction: column;
    min-width: 0;
    border-left: 1px solid #0078d7;
    background: #f0f0f0;
    box-shadow: 0 0 16px rgba(0, 0, 0, 0.4);
}

.titlebar {
    display: flex;
    align-items: flex-end;
    gap: 8px;
    height: 11px;
    padding: 0 0 8px 8px;
    overflow: hidden;
    background: #0078d7;
    color: #fff;
    line-height: 14px;
    white-space: nowrap;
}

.app-icon {
    flex: none;
    width: 16px;
    height: 16px;
}

.menubar {
    display: flex;
    align-items: center;
    gap: 15px;
    height: 19px;
    padding-left: 8px;
    background: #fff;
}

.doc-icon {
    width: 15px;
    height: 16px;
    margin-right: -8px;
}

.menubar button {
    line-height: 18px;
    white-space: nowrap;
}

.toolbars {
    display: flex;
    flex-direction: column;
    gap: 1px;
    padding-top: 2px;
    overflow: hidden;
}

.bar-row {
    display: flex;
}

.toolbar {
    display: flex;
    flex: none;
    align-items: center;
    height: 27px;
    padding: 0 3px;
    border: 1px solid #a0a0a0;
    border-top-color: #fff;
    border-left: 0;
}

.grip {
    flex: none;
    width: 7px;
    height: 23px;
    margin-right: 3px;
    border: 1px solid #a8a8a8;
    border-width: 0 1px;
    background: linear-gradient(90deg, #fff 2px, #a8a8a8 2px, #a8a8a8 3px, #fff 3px);
}

.sep {
    flex: none;
    width: 2px;
    height: 18px;
    margin: 0 2px;
    border-left: 1px solid #555;
}

.tool {
    display: flex;
    flex: none;
    align-items: center;
    justify-content: center;
    width: 23px;
    height: 22px;
}

.tool svg {
    width: 18px;
    height: 18px;
    fill: none;
}

.drop {
    width: 12px;
    height: 22px;
}

.drop::before {
    content: "";
    display: block;
    width: 0;
    margin: 0 auto;
    border: 3px solid transparent;
    border-top-color: #00107a;
    border-bottom: 0;
}

.drop.off::before {
    border-top-color: #b5b5b5;
}

.combo {
    display: flex;
    flex: none;
    align-items: center;
    height: 22px;
    padding-left: 4px;
    border: 1px solid #777;
    background: #fff;
}

.combo.soft {
    border-color: #ccc;
}

.combo select {
    flex: 1;
    min-width: 0;
    height: 20px;
    padding: 0;
    border: 0;
    appearance: none;
    background: url("data:image/svg+xml,%3Csvg xmlns='http://www.w3.org/2000/svg' width='14' height='8'%3E%3Cpath d='M1 1l4 4 4-4' fill='none' stroke='%23555'/%3E%3C/svg%3E") no-repeat right 8px;
    font: 11px "Liberation Mono", "Noto Sans CJK SC", monospace;
    color: #000;
}

.combo.soft select {
    background-image: url("data:image/svg+xml,%3Csvg xmlns='http://www.w3.org/2000/svg' width='14' height='8'%3E%3Cpath d='M1 1l4 4 4-4' fill='none' stroke='%23aaa'/%3E%3C/svg%3E");
}

.combo.style {
    width: 100px;
}

.combo.property {
    width: 150px;
}

.combo.workspace-name {
    width: 175px;
    padding-left: 8px;
}

.combo.layer {
    width: 300px;
}

.layer-state {
    width: 66px;
    height: 18px;
}

.swatch {
    flex: none;
    width: 11px;
    height: 11px;
    margin: 0 4px 0 1px;
    border: 1px solid #000;
}

.linetype {
    flex: none;
    width: 60px;
    margin-right: 5px;
    border-top: 1px solid #000;
}

/* drawing area */
.workspace {
    display: flex;
    flex: 1;
    min-height: 0;
}

.draw-tools {
    display: flex;
    flex-direction: column;
    align-items: center;
    align-self: flex-start;
    width: 25px;
    padding: 2px 0 4px;
    border: 1px solid #a0a0a0;
    border-width: 0 1px 1px 0;
}

.grip.flat {
    width: 20px;
    height: 7px;
    margin: 0 0 2px;
    border-width: 1px 0;
    background: linear-gradient(#fff 2px, #a8a8a8 2px, #a8a8a8 3px, #fff 3px);
}

.node {
    fill: #0f74c8;
}

.letter {
    font-size: 17px;
}

.model {
    display: flex;
    flex: 1;
    flex-direction: column;
    min-width: 0;
    margin-left: 1px;
    border: 2px solid #808080;
    border-width: 2px 0 0 2px;
}

.canvas {
    flex: 1;
    min-height: 0;
    overflow: hidden;
    background: #000;
}

.drawing {
    display: block;
    font-family: "Liberation Mono", "Noto Sans CJK SC", monospace;
    fill: none;
    shape-rendering: crispEdges;
}

.w { stroke: #fff; }
.b { stroke: #00f; }
.r { stroke: #f00; }
.m { stroke: #f0f; }
.p { stroke: #7010ff; }
.heavy { stroke: #fff; stroke-width: 2; }
.fill-b { fill: #00f; }
.fill-m { fill: #f0f; }
.bolt-head { fill: #9010e0; }
.dash { stroke-dasharray: 14 2 3 2; }
.dashdot { stroke-dasharray: 9 2 2 2 2 2; }

.ticks {
    stroke: #7010ff;
    stroke-width: 6;
    stroke-dasharray: 1 7;
}

.title,
.t10,
.t9,
.t8,
.dim {
    fill: #00f;
}

.title { font-size: 12px; }
.t10 { font-size: 10px; }
.t9 { font-size: 9px; }

.t8 {
    font-size: 8px;
    font-weight: bold;
}

.dim {
    font-size: 6px;
    font-weight: bold;
}

.faint {
    fill: #0000b0;
    font-size: 7px;
}

.out {
    fill: #fff;
    font-size: 7px;
    font-weight: bold;
}

.ucs {
    stroke: #fff;
}

.ucs text {
    fill: #fff;
    stroke: none;
    font-family: Lato, sans-serif;
    font-size: 18px;
    font-weight: 300;
}

.tabs {
    display: flex;
    height: 16px;
}

.step {
    width: 18px;
    height: 14px;
    border: 1px solid #a0a0a0;
    border-width: 0 1px 1px 0;
}

.step svg {
    display: block;
    width: 12px;
    height: 10px;
    margin: 0 auto;
}

.tab {
    position: relative;
    align-self: flex-start;
    margin-left: 3px;
    padding: 0 8px;
    line-height: 14px;
}

.tab + .tab {
    margin-left: -5px;
}

.tab svg {
    position: absolute;
    left: 0;
    top: 0;
    width: 100%;
    height: 14px;
    fill: #fff;
    stroke: #000;
}

.tab span {
    position: relative;
}

.tab.current {
    color: #fff;
}

.tab.current svg {
    fill: #000;
}

/* command line */
.command {
    display: flex;
    height: 32px;
    padding: 9px 0 0 6px;
    border-top: 1px solid #fff;
    background: linear-gradient(transparent 3px, #777 3px, #777 5px, transparent 5px);
    overflow: hidden;
}

.command .grip {
    margin-right: 4px;
}

.prompt {
    display: flex;
    flex: 1;
    align-items: flex-start;
    border: 2px solid #777;
    border-width: 2px 0 0 2px;
    background: #fff;
    font-family: "Liberation Mono", "Noto Sans CJK SC", monospace;
    font-size: 16px;
    line-height: 20px;
}

.prompt input {
    flex: 1;
    min-width: 0;
    border: 0;
    outline: 0;
    font: inherit;
}
```
